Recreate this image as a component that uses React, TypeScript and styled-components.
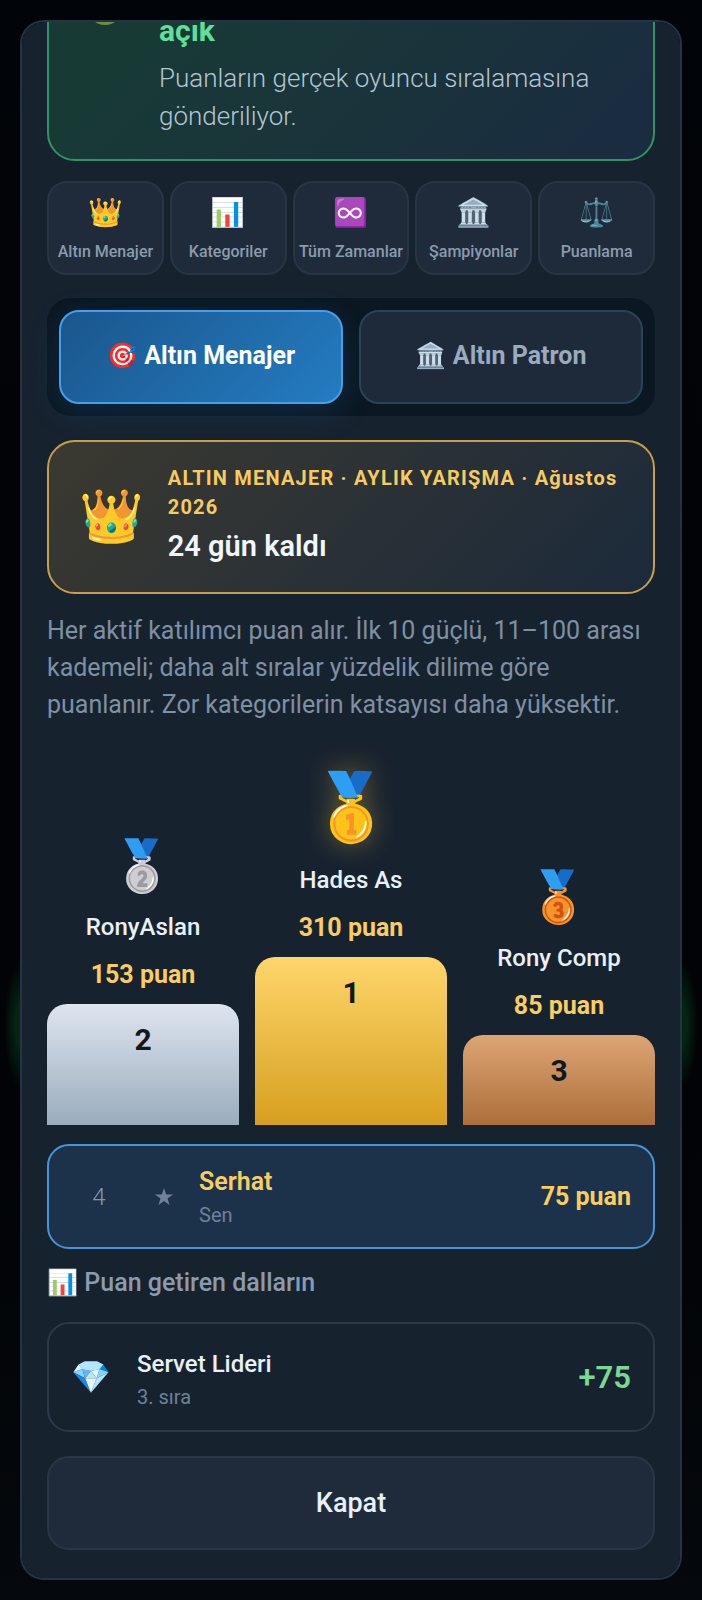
import React from "react";
import styled, { createGlobalStyle, css } from "styled-components";

const Global = createGlobalStyle`
  * { box-sizing: border-box; }
  body {
    margin: 0;
    background: #020509;
    color: #e8f0f8;
    font-family: Roboto, "Noto Sans", "Noto Color Emoji", sans-serif;
    font-size: 25px;
  }
  button { font: inherit; cursor: pointer; }
  h2, p { margin: 0; }
`;

const Backdrop = styled.div`
  min-height: 100vh;
  padding: 20px;
  background:
    radial-gradient(ellipse 16px 64px at 20px 1025px, #052413 30%, transparent 100%),
    radial-gradient(ellipse 16px 64px at calc(100% - 20px) 1025px, #052413 30%, transparent 100%),
    linear-gradient(#010408, #010306 70%, #05080c);
`;

const Dialog = styled.main`
  height: calc(100vh - 40px);
  display: flex;
  flex-direction: column-reverse;
  overflow-y: auto;
  scrollbar-width: none;
  background: #17222f;
  border: 2px solid #263442;
  border-radius: 24px;
`;

const Content = styled.div`
  display: flex;
  flex-direction: column;
  padding: 0 25px 28px;
`;

const LiveCard = styled.section`
  display: flex;
  align-items: flex-start;
  gap: 24px;
  padding: 24px;
  border: 2px solid #319266;
  border-radius: 28px;
  background: linear-gradient(135deg, #183a35 20%, #1a2d40 90%);
`;

const LiveIcon = styled.svg`
  flex: none;
  width: 62px;
  height: 24px;
`;

const LiveTitle = styled.h2`
  color: #5fe09a;
  font-size: 30px;
  line-height: 56px;
  font-weight: 700;
`;

const LiveText = styled.p`
  color: #b4c6d4;
  font-size: 26px;
  font-weight: 300;
  line-height: 38px;
`;

const Tabs = styled.nav`
  display: grid;
  grid-template-columns: repeat(5, 1fr);
  gap: 6px;
  margin-top: 20px;
`;

const Tab = styled.button`
  display: flex;
  flex-direction: column;
  align-items: center;
  gap: 13px;
  height: 94px;
  padding: 14px 0 0;
  border: 2px solid #283543;
  border-radius: 20px;
  background: #1f2b3a;
  color: #8b9bae;
  font-size: 16px;
  line-height: 20px;
  font-weight: 500;
  white-space: nowrap;
`;

const TabIcon = styled.span`
  font-size: 28px;
  line-height: 32px;
`;

const Segments = styled.div`
  display: grid;
  grid-template-columns: 1fr 1fr;
  gap: 16px;
  margin-top: 23px;
  padding: 12px;
  border-radius: 24px;
  background: #0b1722;
`;

const Segment = styled.button<{ $active?: boolean }>`
  height: 94px;
  padding: 0 0 4px;
  border: 2px solid #2b4356;
  border-radius: 20px;
  background: #1e2a3a;
  color: #9aabbd;
  font-weight: 700;
  ${(p) =>
    p.$active &&
    css`
      border-color: #479fe8;
      background: linear-gradient(135deg, #1a568c, #247cc2);
      color: #ffffff;
      box-shadow: 0 8px 32px rgba(32, 120, 190, 0.2);
    `}
`;

const Contest = styled.section`
  display: flex;
  align-items: center;
  gap: 24px;
  margin-top: 24px;
  padding: 22px 28px 22px 30px;
  border: 2px solid #c5a048;
  border-radius: 28px;
  background: linear-gradient(135deg, #3b3930, #1b2a3b);
`;

const ContestIcon = styled.span`
  font-size: 52px;
  line-height: 60px;
`;

const ContestLabel = styled.p`
  color: #f5cb62;
  font-size: 20px;
  line-height: 29px;
  font-weight: 700;
  letter-spacing: 0.06em;
`;

const ContestTime = styled.p`
  font-size: 29px;
  line-height: 48px;
  font-weight: 600;
  color: #f0f6fc;
`;

const Note = styled.p`
  margin-top: 18px;
  color: #7f8fa4;
  font-weight: 400;
  line-height: 37px;
`;

const Podium = styled.ol`
  display: grid;
  grid-template-columns: repeat(3, 1fr);
  align-items: end;
  gap: 16px;
  margin: 36px 0 0;
  padding: 0;
  list-style: none;
`;

const Place = styled.li`
  display: flex;
  flex-direction: column;
  align-items: center;
  line-height: 47px;
`;

const Medal = styled.span<{ $first?: boolean }>`
  font-size: ${(p) => (p.$first ? 66 : 50)}px;
  line-height: ${(p) => (p.$first ? 98 : 75)}px;
  ${(p) => p.$first && "filter: drop-shadow(0 0 14px rgba(240, 190, 60, 0.4));"}
`;

const Name = styled.span`
  font-size: 24px;
  font-weight: 500;
`;

const Score = styled.span`
  color: #f8cd62;
  font-weight: 700;
`;

const Bar = styled.div<{ $height: number; $from: string; $to: string }>`
  width: 100%;
  height: ${(p) => p.$height}px;
  margin-top: 6px;
  padding-top: 12px;
  border-radius: 20px 20px 0 0;
  background: linear-gradient(${(p) => p.$from}, ${(p) => p.$to});
  color: #111820;
  font-size: 30px;
  font-weight: 700;
  text-align: center;
`;

const Row = styled.section<{ $mine?: boolean }>`
  display: flex;
  align-items: center;
  height: ${(p) => (p.$mine ? 105 : 110)}px;
  margin-top: ${(p) => (p.$mine ? 19 : 24)}px;
  padding: 0 22px;
  border: 2px solid ${(p) => (p.$mine ? "#4795d8" : "#2a3a49")};
  border-radius: 22px;
  ${(p) => p.$mine && "background: #1c324a;"}
`;

const Rank = styled.span`
  width: 56px;
  color: #8496aa;
  font-size: 24px;
  font-weight: 300;
  text-align: center;
`;

const Star = styled.svg`
  width: 18px;
  height: 18px;
  margin: 0 26px 0 28px;
`;

const RowIcon = styled.span`
  width: 66px;
  font-size: 32px;
  line-height: 40px;
`;

const RowText = styled.div<{ $mine?: boolean }>`
  flex: 1;
  display: flex;
  flex-direction: column;
  padding-top: ${(p) => (p.$mine ? 0 : 4)}px;
`;

const RowName = styled.span<{ $mine?: boolean }>`
  color: ${(p) => (p.$mine ? "#f8cd62" : "#e8f0f8")};
  font-size: ${(p) => (p.$mine ? 25 : 24)}px;
  font-weight: ${(p) => (p.$mine ? 600 : 500)};
  line-height: 36px;
`;

const RowSub = styled.span`
  color: #70819a;
  font-size: 20px;
  font-weight: 400;
  line-height: 30px;
`;

const Gain = styled.span`
  color: #7cd694;
  font-size: 31px;
  font-weight: 600;
`;

const Heading = styled.h2`
  margin-top: 18px;
  color: #8b9bae;
  font-size: 25px;
  line-height: 31px;
  font-weight: 500;
`;

const Close = styled.button`
  height: 94px;
  margin-top: 24px;
  border: 2px solid #283746;
  border-radius: 22px;
  background: #1f2b3a;
  color: #e8f0f8;
  font-size: 27px;
  font-weight: 500;
`;

const tabs = [
  ["👑", "Altın Menajer"],
  ["📊", "Kategoriler"],
  ["♾️", "Tüm Zamanlar"],
  ["🏛️", "Şampiyonlar"],
  ["⚖️", "Puanlama"],
];

const places = [
  { medal: "🥈", name: "RonyAslan", score: 153, rank: 2, height: 121, from: "#dde5ef", to: "#9aacbd" },
  { medal: "🥇", name: "Hades As", score: 310, rank: 1, height: 168, from: "#ffd66b", to: "#d69f20" },
  { medal: "🥉", name: "Rony Comp", score: 85, rank: 3, height: 90, from: "#dda574", to: "#ad6e3b" },
];

export default function App() {
  return (
    <>
      <Global />
      <Backdrop>
        <Dialog>
          <Content>
            <LiveCard>
              <LiveIcon viewBox="0 0 62 24" aria-hidden="true">
                <circle cx="32" cy="4" r="18" fill="#6f8a45" />
              </LiveIcon>
              <div>
                <LiveTitle>açık</LiveTitle>
                <LiveText>Puanların gerçek oyuncu sıralamasına gönderiliyor.</LiveText>
              </div>
            </LiveCard>

            <Tabs>
              {tabs.map(([icon, label]) => (
                <Tab key={label}>
                  <TabIcon>{icon}</TabIcon>
                  {label}
                </Tab>
              ))}
            </Tabs>

            <Segments>
              <Segment $active>🎯 Altın Menajer</Segment>
              <Segment>🏛️ Altın Patron</Segment>
            </Segments>

            <Contest>
              <ContestIcon>👑</ContestIcon>
              <div>
                <ContestLabel>ALTIN MENAJER · AYLIK YARIŞMA · Ağustos 2026</ContestLabel>
                <ContestTime>24 gün kaldı</ContestTime>
              </div>
            </Contest>

            <Note>
              Her aktif katılımcı puan alır. İlk 10 güçlü, 11–100 arası kademeli; daha alt sıralar
              yüzdelik dilime göre puanlanır. Zor kategorilerin katsayısı daha yüksektir.
            </Note>

            <Podium>
              {places.map((p) => (
                <Place key={p.rank}>
                  <Medal $first={p.rank === 1}>{p.medal}</Medal>
                  <Name>{p.name}</Name>
                  <Score>{p.score} puan</Score>
                  <Bar $height={p.height} $from={p.from} $to={p.to}>
                    {p.rank}
                  </Bar>
                </Place>
              ))}
            </Podium>

            <Row $mine>
              <Rank>4</Rank>
              <Star viewBox="0 0 20 20" aria-hidden="true">
                <path d="M10 0l2.4 7.2H20l-6.1 4.5L16.200 19 10 14.500 3.800 19l2.300-7.300L0 7.200h7.600z" fill="#70819a" />
              </Star>
              <RowText $mine>
                <RowName $mine>Serhat</RowName>
                <RowSub>Sen</RowSub>
              </RowText>
              <Score>75 puan</Score>
            </Row>

            <Heading>📊 Puan getiren dalların</Heading>

            <Row>
              <RowIcon>💎</RowIcon>
              <RowText>
                <RowName>Servet Lideri</RowName>
                <RowSub>3. sıra</RowSub>
              </RowText>
              <Gain>+75</Gain>
            </Row>

            <Close>Kapat</Close>
          </Content>
        </Dialog>
      </Backdrop>
    </>
  );
}
